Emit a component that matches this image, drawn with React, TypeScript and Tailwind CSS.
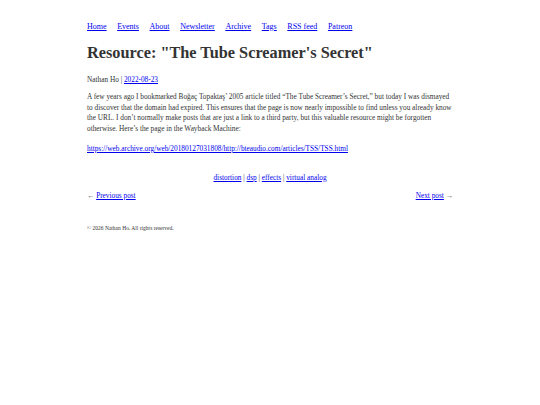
import React from 'react';

const navItems = ['Home', 'Events', 'About', 'Newsletter', 'Archive', 'Tags', 'RSS feed', 'Patreon'];
const tags = ['distortion', 'dsp', 'effects', 'virtual analog'];

const A: React.FC<{ children: React.ReactNode }> = ({ children }) => (
  <a href="#" className="text-[#0000ee] underline">{children}</a>
);

const App: React.FC = () => {
  return (
    <div className="min-h-screen bg-white font-['Liberation_Serif',serif] text-[#333]">
      <div className="mx-auto w-[366px] pt-[21px]">
        <nav className="flex gap-[10.6px] text-[8px] leading-[12px]">
          {navItems.map((item) => (
            <A key={item}>{item}</A>
          ))}
        </nav>

        <h1 className="mt-[9px] text-[16.3px] font-bold leading-[22px]">
          Resource: "The Tube Screamer's Secret"
        </h1>

        <p className="mt-[10px] text-[7.3px] leading-[11px]">
          Nathan Ho | <A>2022-08-23</A>
        </p>

        <p className="mt-[7px] text-[7.3px] leading-[10.7px]">
          A few years ago I bookmarked Boğaç Topaktaş’ 2005 article titled “The Tube Screamer’s Secret,” but today I was dismayed to discover that the domain had expired. This ensures that the page is now nearly impossible to find unless you already know the URL. I don’t normally make posts that are just a link to a third party, but this valuable resource might be forgotten otherwise. Here’s the page in the Wayback Machine:
        </p>

        <p className="mt-[8px] text-[7.3px] leading-[11px]">
          <A>https://web.archive.org/web/20180127031808/http://bteaudio.com/articles/TSS/TSS.html</A>
        </p>

        <p className="mt-[18px] text-center text-[7.3px] leading-[11px]">
          {tags.map((t, i) => (
            <React.Fragment key={t}>
              {i > 0 && ' | '}
              <A>{t}</A>
            </React.Fragment>
          ))}
        </p>

        <div className="mt-[7px] flex justify-between text-[7.3px] leading-[11px]">
          <span>← <A>Previous post</A></span>
          <span><A>Next post</A> →</span>
        </div>

        <footer className="mt-[23px] text-[5.5px] leading-[8px]">
          © 2026 Nathan Ho. All rights reserved.
        </footer>
      </div>
    </div>
  );
};

export default App;
